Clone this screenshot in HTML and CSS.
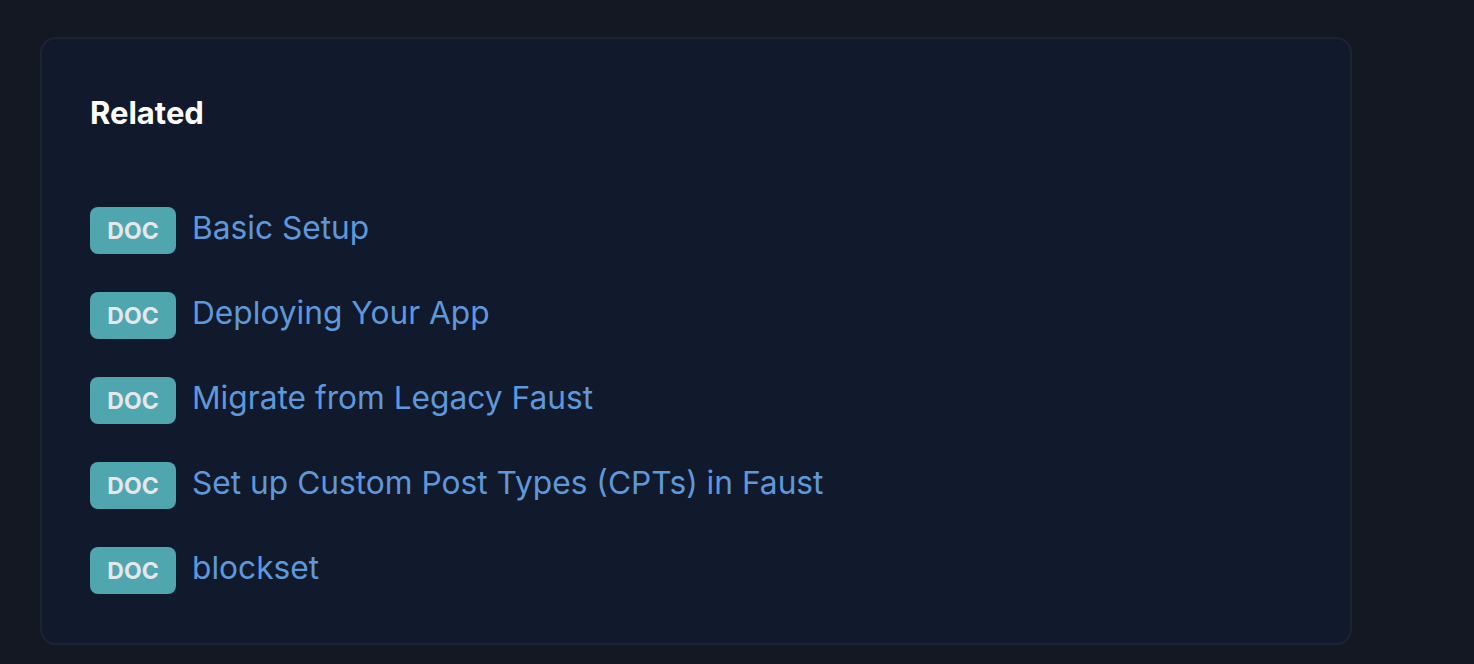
FILE: index.html
```html
<!DOCTYPE html>
<html lang="en">
<head>
<meta charset="UTF-8">
<meta name="viewport" content="width=device-width, initial-scale=1.0">
<title>Related</title>
<link rel="stylesheet" href="styles.css">
</head>
<body>
<div class="related">
  <h2>Related</h2>
  <ul class="related-list">
    <li><span class="badge">DOC</span><a href="#">Basic Setup</a></li>
    <li><span class="badge">DOC</span><a href="#">Deploying Your App</a></li>
    <li><span class="badge">DOC</span><a href="#">Migrate from Legacy Faust</a></li>
    <li><span class="badge">DOC</span><a href="#">Set up Custom Post Types (CPTs) in Faust</a></li>
    <li><span class="badge">DOC</span><a href="#">blockset</a></li>
  </ul>
</div>
</body>
</html>
```

FILE: styles.css
```css
body {
  font-family: Inter, "Noto Sans", sans-serif;
  background-color: #131823;
  color: #ffffff;
  margin: 0;
  padding: 37px 122px 20px 40px;
}
.related {
  background-color: #111a2c;
  border: 2px solid #1b2435;
  border-radius: 16px;
  padding: 52px 48px 40px 48px;
  height: 608px;
  box-sizing: border-box;
}
h2 {
  margin: 0;
  font-size: 31px;
  font-weight: 700;
  line-height: 44px;
}
.related-list {
  list-style: none;
  margin: 72px 0 0 0;
  padding: 0;
  display: flex;
  flex-direction: column;
  gap: 38px;
}
.related-list li {
  display: flex;
  align-items: center;
  gap: 16px;
}
.badge {
  display: inline-flex;
  align-items: center;
  justify-content: center;
  width: 86px;
  height: 47px;
  border-radius: 8px;
  background-color: #4fa6ae;
  color: #e5e7eb;
  font-size: 23px;
  font-weight: 700;
}
.related-list a {
  color: #5f98da;
  text-decoration: none;
  font-size: 31.7px;
  margin-top: -6px;
}
```
